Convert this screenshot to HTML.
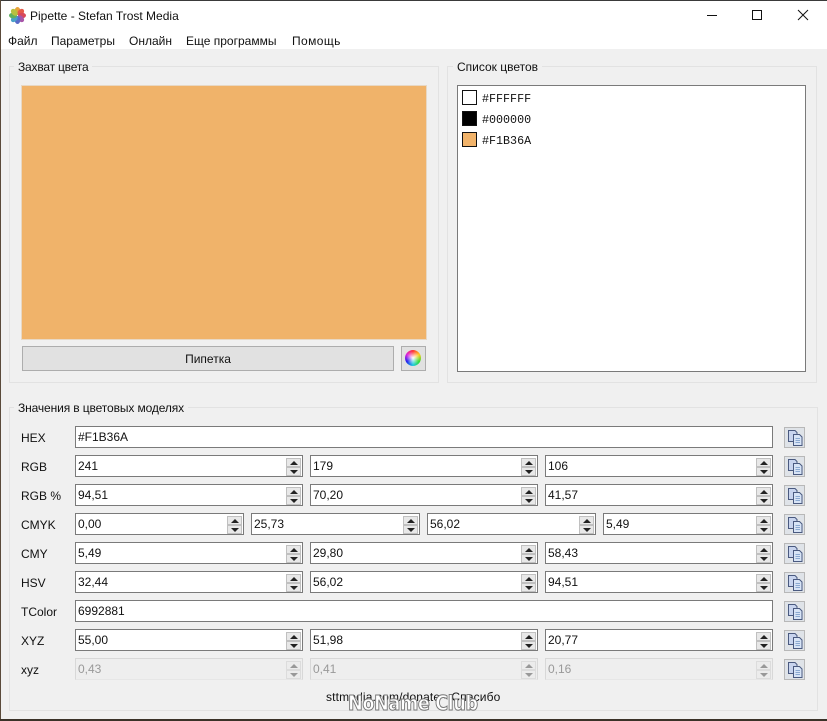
<!DOCTYPE html>
<html><head><meta charset="utf-8"><style>
html,body{margin:0;padding:0;width:827px;height:721px;overflow:hidden;background:#fff}
body{position:relative;font:12px "Liberation Sans","Noto Sans CJK SC",sans-serif;color:#111}
div,span{position:absolute;box-sizing:border-box}
.t{white-space:nowrap;line-height:16px;height:16px}
.g{border:1px solid #e2e2e2}
.i{height:22px;background:#fff;border:1px solid #7a7a7a;line-height:21px;padding-left:2px;white-space:nowrap}
.d{background:#eee;border-color:#d8d8d8;border-bottom-color:#e6e6e6;color:#999}
.u,.w{width:15px;height:9px;background:#e8e8e8;border:1px solid #c0c0c0;top:2px}
.w{top:11px}
.u:after,.w:after{content:"";position:absolute;left:3px;top:2px;border-left:4px solid transparent;border-right:4px solid transparent;border-bottom:4px solid #222}
.w:after{border-bottom:0;border-top:4px solid #222}
.d .u,.d .w{border-color:#dcdcdc;background:#ececec}
.d .u:after{border-bottom-color:#999}.d .w:after{border-top-color:#999}
.c{left:784px;width:21px;height:21px;background:#dfe3e8;border:1px solid #b8b8b8}
.c svg{position:absolute;left:2px;top:1px}
.l{left:21px}
.s{left:462px;width:15px;height:15px;border:1px solid #111}
.m{left:482px;font-family:"Liberation Mono",monospace;font-size:11.7px}
</style></head><body>
<div style="left:0;top:0;width:827px;height:1px;background:#3a3a3a"></div>
<div style="left:0;top:49px;width:827px;height:671px;background:#f0f0f0"></div>
<div style="left:0;top:0;width:1px;height:720px;background:#5a4a3a"></div>
<div style="left:0;top:719px;width:827px;height:2px;background:#3a3228"></div>

<svg style="position:absolute;left:9px;top:7px" width="17" height="17" viewBox="0 0 17 17">
<g transform="translate(8.5 8.5)">
<ellipse cx="0" cy="-4.5" rx="2.8" ry="4" fill="#e8a23a"/>
<ellipse cx="0" cy="-4.5" rx="2.8" ry="4" fill="#e45a4a" transform="rotate(45)"/>
<ellipse cx="0" cy="-4.5" rx="2.8" ry="4" fill="#d8485a" transform="rotate(90)"/>
<ellipse cx="0" cy="-4.5" rx="2.8" ry="4" fill="#a855a8" transform="rotate(135)"/>
<ellipse cx="0" cy="-4.5" rx="2.8" ry="4" fill="#5a6ac8" transform="rotate(180)"/>
<ellipse cx="0" cy="-4.5" rx="2.8" ry="4" fill="#4aa0c8" transform="rotate(225)"/>
<ellipse cx="0" cy="-4.5" rx="2.8" ry="4" fill="#60b060" transform="rotate(270)"/>
<ellipse cx="0" cy="-4.5" rx="2.8" ry="4" fill="#b8c040" transform="rotate(315)"/>
</g></svg>
<div class="t" style="left:30px;top:8px">Pipette - Stefan Trost Media</div>
<svg style="position:absolute;left:700px;top:5px" width="120" height="20" fill="none" stroke="#111" stroke-width="1">
<path d="M7 10.5H17"/><rect x="52.5" y="5.5" width="9" height="9"/><path d="M98 5L108 15M108 5L98 15"/></svg>

<div class="t" style="left:8px;top:33px">Файл</div>
<div class="t" style="left:51px;top:33px">Параметры</div>
<div class="t" style="left:129px;top:33px">Онлайн</div>
<div class="t" style="left:186px;top:33px">Еще программы</div>
<div class="t" style="left:292px;top:33px;letter-spacing:.4px">Помощь</div>

<div class="g" style="left:9px;top:66px;width:430px;height:317px"></div>
<div class="t" style="left:14px;top:59px;background:#f0f0f0;padding:0 4px;letter-spacing:-.2px">Захват цвета</div>
<div style="left:21px;top:85px;width:406px;height:255px;background:#f0b36a;border:1px solid #e8d8c4"></div>
<div style="left:22px;top:346px;width:372px;height:25px;background:#e1e1e1;border:1px solid #adadad;text-align:center;line-height:24px">Пипетка</div>
<div style="left:401px;top:346px;width:25px;height:25px;background:#e1e1e1;border:1px solid #adadad"></div>
<div style="left:405px;top:350px;width:16px;height:16px;border-radius:50%;background:radial-gradient(circle,#fff 0,rgba(255,255,255,0) 60%),conic-gradient(#f33,#fc2,#3d3,#2cd,#22e,#d2d,#f33)"></div>

<div class="g" style="left:447px;top:66px;width:370px;height:317px"></div>
<div class="t" style="left:453px;top:59px;background:#f0f0f0;padding:0 4px">Список цветов</div>
<div style="left:457px;top:85px;width:349px;height:287px;background:#fff;border:1px solid #7a7a7a"></div>
<div class="s" style="top:90px;background:#fff"></div><div class="t m" style="top:91px">#FFFFFF</div>
<div class="s" style="top:111px;background:#000"></div><div class="t m" style="top:112px">#000000</div>
<div class="s" style="top:132px;background:#f1b36a"></div><div class="t m" style="top:133px">#F1B36A</div>

<div class="g" style="left:9px;top:407px;width:809px;height:304px"></div>
<div class="t" style="left:14px;top:400px;background:#f0f0f0;padding:0 4px;letter-spacing:-.12px">Значения в цветовых моделях</div>

<div class="t l" style="top:430px">HEX</div>
<div class="t l" style="top:459px">RGB</div>
<div class="t l" style="top:488px">RGB %</div>
<div class="t l" style="top:517px">CMYK</div>
<div class="t l" style="top:546px">CMY</div>
<div class="t l" style="top:575px">HSV</div>
<div class="t l" style="top:604px">TColor</div>
<div class="t l" style="top:633px">XYZ</div>
<div class="t l" style="top:662px">xyz</div>

<div class="i" style="left:75px;top:426px;width:698px">#F1B36A</div>
<div class="i" style="left:75px;top:455px;width:228px">241<span class="u" style="left:210px"></span><span class="w" style="left:210px"></span></div>
<div class="i" style="left:310px;top:455px;width:228px">179<span class="u" style="left:210px"></span><span class="w" style="left:210px"></span></div>
<div class="i" style="left:545px;top:455px;width:228px">106<span class="u" style="left:210px"></span><span class="w" style="left:210px"></span></div>
<div class="i" style="left:75px;top:484px;width:228px">94,51<span class="u" style="left:210px"></span><span class="w" style="left:210px"></span></div>
<div class="i" style="left:310px;top:484px;width:228px">70,20<span class="u" style="left:210px"></span><span class="w" style="left:210px"></span></div>
<div class="i" style="left:545px;top:484px;width:228px">41,57<span class="u" style="left:210px"></span><span class="w" style="left:210px"></span></div>
<div class="i" style="left:75px;top:513px;width:169px">0,00<span class="u" style="left:151px"></span><span class="w" style="left:151px"></span></div>
<div class="i" style="left:251px;top:513px;width:169px">25,73<span class="u" style="left:151px"></span><span class="w" style="left:151px"></span></div>
<div class="i" style="left:427px;top:513px;width:169px">56,02<span class="u" style="left:151px"></span><span class="w" style="left:151px"></span></div>
<div class="i" style="left:603px;top:513px;width:170px">5,49<span class="u" style="left:152px"></span><span class="w" style="left:152px"></span></div>
<div class="i" style="left:75px;top:542px;width:228px">5,49<span class="u" style="left:210px"></span><span class="w" style="left:210px"></span></div>
<div class="i" style="left:310px;top:542px;width:228px">29,80<span class="u" style="left:210px"></span><span class="w" style="left:210px"></span></div>
<div class="i" style="left:545px;top:542px;width:228px">58,43<span class="u" style="left:210px"></span><span class="w" style="left:210px"></span></div>
<div class="i" style="left:75px;top:571px;width:228px">32,44<span class="u" style="left:210px"></span><span class="w" style="left:210px"></span></div>
<div class="i" style="left:310px;top:571px;width:228px">56,02<span class="u" style="left:210px"></span><span class="w" style="left:210px"></span></div>
<div class="i" style="left:545px;top:571px;width:228px">94,51<span class="u" style="left:210px"></span><span class="w" style="left:210px"></span></div>
<div class="i" style="left:75px;top:600px;width:698px">6992881</div>
<div class="i" style="left:75px;top:629px;width:228px">55,00<span class="u" style="left:210px"></span><span class="w" style="left:210px"></span></div>
<div class="i" style="left:310px;top:629px;width:228px">51,98<span class="u" style="left:210px"></span><span class="w" style="left:210px"></span></div>
<div class="i" style="left:545px;top:629px;width:228px">20,77<span class="u" style="left:210px"></span><span class="w" style="left:210px"></span></div>
<div class="i d" style="left:75px;top:658px;width:228px">0,43<span class="u" style="left:210px"></span><span class="w" style="left:210px"></span></div>
<div class="i d" style="left:310px;top:658px;width:228px">0,41<span class="u" style="left:210px"></span><span class="w" style="left:210px"></span></div>
<div class="i d" style="left:545px;top:658px;width:228px">0,16<span class="u" style="left:210px"></span><span class="w" style="left:210px"></span></div>

<svg width="0" height="0" style="position:absolute"><defs><g id="cp">
<path d="M1.5 1.5H8L10 3.5V12.5H1.5Z" fill="#c8d4ee" stroke="#4a5a80"/>
<path d="M6.5 5.5H12.5L15 8V16.5H6.5Z" fill="#d8e4f6" stroke="#4a5a80"/>
<path d="M8.5 9.5H13M8.5 11.5H13M8.5 13.5H13" stroke="#8aa8d0"/></g></defs></svg>
<div class="c" style="top:427px"><svg width="17" height="18"><use href="#cp"/></svg></div>
<div class="c" style="top:456px"><svg width="17" height="18"><use href="#cp"/></svg></div>
<div class="c" style="top:485px"><svg width="17" height="18"><use href="#cp"/></svg></div>
<div class="c" style="top:514px"><svg width="17" height="18"><use href="#cp"/></svg></div>
<div class="c" style="top:543px"><svg width="17" height="18"><use href="#cp"/></svg></div>
<div class="c" style="top:572px"><svg width="17" height="18"><use href="#cp"/></svg></div>
<div class="c" style="top:601px"><svg width="17" height="18"><use href="#cp"/></svg></div>
<div class="c" style="top:630px"><svg width="17" height="18"><use href="#cp"/></svg></div>
<div class="c" style="top:659px"><svg width="17" height="18"><use href="#cp"/></svg></div>

<div class="t" style="left:326px;top:689px;letter-spacing:.15px">sttmedia.com/donate - Спасибо</div>
<div class="t" style="left:348px;top:692px;height:22px;font:bold 20px/22px 'DejaVu Sans',sans-serif;color:#fff;-webkit-text-stroke:1px #777;letter-spacing:-.6px;transform:scaleX(.89);transform-origin:0 0">NoName Club</div>
</body></html>
